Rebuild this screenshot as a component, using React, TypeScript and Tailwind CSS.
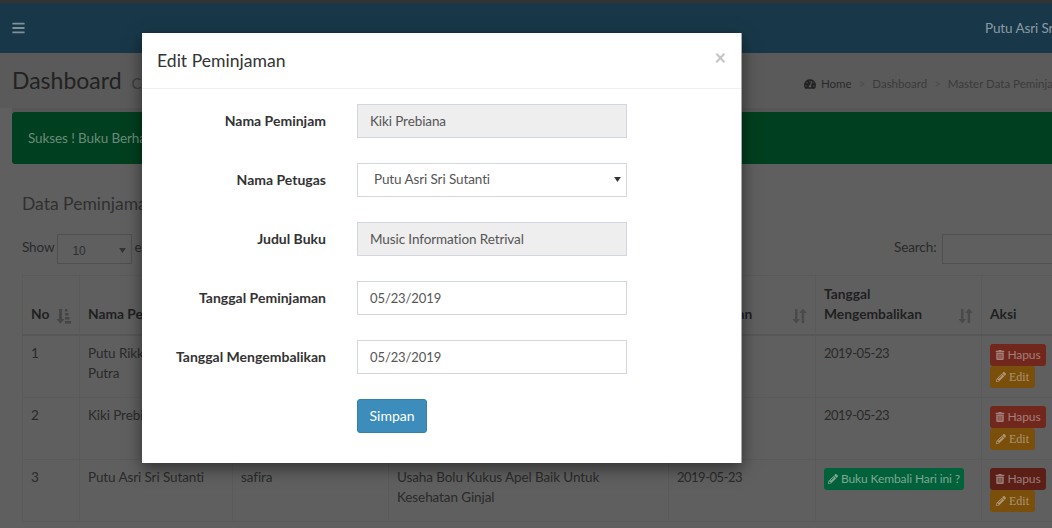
import { FaBars, FaTachometerAlt, FaTrashAlt, FaPencilAlt } from "react-icons/fa";

const font = { fontFamily: "Lato, 'Noto Sans', sans-serif" };

function SortAsc() {
  return (
    <svg width="15" height="16" viewBox="0 0 15 16" className="shrink-0 text-[#454545]" fill="currentColor">
      <path d="M3 1h3v10h2.500l-4 4.500-4-4.500H3z" />
      <rect x="9" y="1" width="2.500" height="2.500" />
      <rect x="9" y="5" width="3.500" height="2.500" />
      <rect x="9" y="9" width="4.500" height="2.500" />
      <rect x="9" y="13" width="6" height="2.500" />
    </svg>
  );
}

function SortBoth() {
  return (
    <svg width="15" height="16" viewBox="0 0 15 16" className="shrink-0 text-[#4a4a4a]" fill="currentColor">
      <path d="M3 1h2.500v10H8l-3.750 4.500L.5 11H3z" />
      <path d="M11 .5l3.750 4.500H12.200v10H9.700V5H7.200z" />
    </svg>
  );
}

function Triangle() {
  return (
    <svg width="7" height="5" viewBox="0 0 8 6" className="pointer-events-none absolute right-[6px] top-[14px] text-[#333]" fill="currentColor">
      <path d="M0 0h8L4 6z" />
    </svg>
  );
}

function Actions({ dark }: { dark?: boolean }) {
  return (
    <div className="flex flex-col items-start">
      <span
        className={
          dark
            ? "flex h-[22px] w-[56px] items-center justify-center gap-[2px] rounded-[3px] bg-[#5c1f17] text-[12px] text-[#9b7d79]"
            : "flex h-[22px] w-[56px] items-center justify-center gap-[2px] rounded-[3px] bg-[#72271d] text-[12px] text-[#a37f7a]"
        }
      >
        <FaTrashAlt className="text-[10px]" />
        Hapus
      </span>
      <span
        className="flex h-[22px] w-[45px] items-center justify-center gap-[3px] rounded-[3px] bg-[#7a4f0c] text-[12px] tracking-normal text-[#ad9670]"
        style={{ fontFamily: "'Liberation Serif', serif" }}
      >
        <FaPencilAlt className="text-[10px]" />
        Edit
      </span>
    </div>
  );
}

const rows = [
  { no: "1", nama: "Putu Rikky Pratama Putra", petugas: "safira", buku: "Sistem Informasi Manajemen", pinjam: "2019-05-23", kembali: "2019-05-23", h: "h-[63px]" },
  { no: "2", nama: "Kiki Prebiana", petugas: "safira", buku: "Music Information Retrival", pinjam: "2019-05-23", kembali: "2019-05-23", h: "h-[62px]" },
  { no: "3", nama: "Putu Asri Sri Sutanti", petugas: "safira", buku: "Usaha Bolu Kukus Apel Baik Untuk Kesehatan Ginjal", pinjam: "2019-05-23", kembali: "", h: "h-[62px]" },
];

const fieldClass =
  "h-[34px] w-[270px] border border-[#d2d6de] px-3 pb-[1px] text-[13.5px] tracking-[-0.1px] text-[#555] outline-none";

const dateClass =
  "h-[34px] w-[270px] border border-[#d2d6de] bg-white px-3 pb-[1px] text-[13px] text-[#555] outline-none";

const td = "border border-[#5a5a5a] px-[8px] pt-[7px] align-top leading-[20px]";

function Row({ label, children }: { label: string; children: React.ReactNode }) {
  return (
    <div className="mb-[25px] flex items-center">
      <label className="mr-[31px] w-[169px] pb-[1px] text-right text-[14px] font-bold tracking-normal text-[#333]">{label}</label>
      {children}
    </div>
  );
}

export default function App() {
  return (
    <div className="relative h-[528px] w-[1052px] overflow-hidden bg-[#5a5c5e] text-[13.5px] tracking-[-0.1px] text-[#2a2a2a]" style={font}>
      <div className="w-[1130px]">
        <div className="h-[3px] bg-[#333333]" />
        <header className="flex h-[50px] items-center bg-[#183849] pl-3 text-[#8b9ba5]">
          <FaBars className="shrink-0 text-[14px] text-[#7f909b]" style={{ width: 13, marginRight: 960 }} />
          <span>Putu Asri Sri Sutanti</span>
        </header>

        <div className="flex h-[55px] items-center bg-[#5a5a5a] pl-3">
          <div className="flex w-[792px] items-baseline gap-[10px]">
            <h1 className="mt-[2px] text-[23px] leading-none tracking-normal text-[#222]">Dashboard</h1>
            <span className="text-[15px] text-[#3c3c3c]">Control panel</span>
          </div>
          <div className="mt-[7px] flex items-center text-[11.5px] tracking-normal text-[#3a3a3a]">
            <FaTachometerAlt className="mr-[5px] text-[12px] text-[#222]" />
            <span className="text-[#2a2a2a]">Home</span>
            <span className="mx-[7px] text-[#4c4c4c]">&gt;</span>
            <span>Dashboard</span>
            <span className="mx-[7px] text-[#4c4c4c]">&gt;</span>
            <span>Master Data Peminjaman</span>
          </div>
        </div>

        <div className="bg-[#5f5f5f] pb-4 pl-3">
          <div className="h-[4px] bg-[#565656]" />
          <div className="flex h-[52px] items-center rounded-[3px] bg-[#003f1f] pl-4 text-[#6b8b7a]">
            Sukses ! Buku Berhasil Di Edit
          </div>

          <div className="pl-[10px] pt-[28px]">
            <h3 className="text-[17.5px] leading-[24px] tracking-normal text-[#303030]">Data Peminjaman</h3>

            <div className="mt-[18px] flex h-[30px] items-center">
              <div className="flex w-[872px] shrink-0 items-center">
                <span className="mb-[4px]">Show</span>
                <div className="relative ml-[2px] mr-[3px] h-[30px] w-[75px]">
                  <select
                    defaultValue="10"
                    className="h-[30px] w-[75px] appearance-none border border-[#4f4f4f] bg-transparent pl-[15px] pt-[3px] text-[12px] text-[#2f2f2f]"
                    style={{ fontFamily: "'Liberation Sans', sans-serif" }}
                  >
                    <option>10</option>
                  </select>
                  <Triangle />
                </div>
                <span className="mb-[4px]">entries</span>
              </div>
              <span className="mb-[4px] mr-[6px] shrink-0">Search:</span>
              <input readOnly className="h-[30px] w-[180px] shrink-0 border border-[#4f4f4f] bg-transparent" />
            </div>

            <table className="mt-[11px] w-[1040px] table-fixed border-collapse">
              <colgroup>
                <col className="w-[57px]" />
                <col className="w-[153px]" />
                <col className="w-[156px]" />
                <col className="w-[280px]" />
                <col className="w-[147px]" />
                <col className="w-[166px]" />
                <col className="w-[81px]" />
              </colgroup>
              <thead>
                <tr className="h-[59px] text-left text-[13.8px] font-bold tracking-normal text-[#1f1f1f]">
                  {[
                    ["No", <SortAsc key="a" />],
                    ["Nama Peminjam", <SortBoth key="b" />],
                    ["Nama Petugas", <SortBoth key="c" />],
                    ["Judul Buku", <SortBoth key="d" />],
                    ["Tanggal Peminjaman", <SortBoth key="e" />],
                    ["Tanggal Mengembalikan", <SortBoth key="f" />],
                    ["Aksi", null],
                  ].map(([h, icon], i) => (
                    <th key={i} className="border border-b-2 border-[#5a5a5a] border-b-[#575757] px-[8px] pb-[10px] align-bottom leading-[20px]">
                      <div className="flex items-end justify-between">
                        <span className={i === 5 ? "w-[110px]" : i === 4 ? "w-[80px]" : ""}>{h}</span>
                        {icon}
                      </div>
                    </th>
                  ))}
                </tr>
              </thead>
              <tbody>
                {rows.map((r) => (
                  <tr key={r.no} className={`${r.h} text-[#2a2a2a]`}>
                    <td className={td}>{r.no}</td>
                    <td className={td}>{r.nama}</td>
                    <td className={td}>{r.petugas}</td>
                    <td className={td}>{r.buku}</td>
                    <td className={td}>
                      <span className="text-[13px] tracking-[-0.5px]">{r.pinjam}</span>
                    </td>
                    <td className={td}>
                      {r.kembali ? (
                        <span className="text-[13px] tracking-[-0.5px]">{r.kembali}</span>
                      ) : (
                        <span className="mt-[1px] flex h-[22px] w-[140px] items-center justify-center gap-[3px] rounded-[3px] bg-[#00613a] text-[12px] text-[#7fa793]">
                          <FaPencilAlt className="text-[10px]" />
                          Buku Kembali Hari ini ?
                        </span>
                      )}
                    </td>
                    <td className="border border-[#5a5a5a] px-[8px] pt-[8px] align-top">
                      <Actions dark={r.no === "3"} />
                    </td>
                  </tr>
                ))}
              </tbody>
            </table>
          </div>
        </div>
      </div>

      <div className="absolute left-[142px] top-[33px] h-[430px] w-[600px] border-r border-[#a8a8a8] bg-white text-[#333] shadow-[0_5px_15px_rgba(0,0,0,0.5)]">
        <div className="flex h-[56px] items-center justify-between border-b border-[#f0f0f0] px-[15px]">
          <h4 className="mt-[2px] text-[17.6px] tracking-normal text-[#333]">Edit Peminjaman</h4>
          <span className="-mt-[7px] text-[20px] font-bold leading-none text-[#c4c4c4]">×</span>
        </div>
        <div className="pl-[15px] pt-[15px]">
          <Row label="Nama Peminjam">
            <input readOnly value="Kiki Prebiana" className={`${fieldClass} bg-[#eeeeee]`} />
          </Row>
          <Row label="Nama Petugas">
            <div className="relative h-[34px] w-[270px]">
              <select defaultValue="Putu Asri Sri Sutanti" className={`${fieldClass} appearance-none bg-white pl-4`}>
                <option>Putu Asri Sri Sutanti</option>
              </select>
              <Triangle />
            </div>
          </Row>
          <Row label="Judul Buku">
            <input readOnly value="Music Information Retrival" className={`${fieldClass} bg-[#eeeeee]`} />
          </Row>
          <Row label="Tanggal Peminjaman">
            <input readOnly value="05/23/2019" className={dateClass} />
          </Row>
          <Row label="Tanggal Mengembalikan">
            <input readOnly value="05/23/2019" className={dateClass} />
          </Row>
          <div className="pl-[200px]">
            <button className="h-[34px] w-[70px] rounded-[3px] border border-[#367fa9] bg-[#3c8dbc] pb-[1px] text-[14px] tracking-normal text-white">
              Simpan
            </button>
          </div>
        </div>
      </div>
    </div>
  );
}
